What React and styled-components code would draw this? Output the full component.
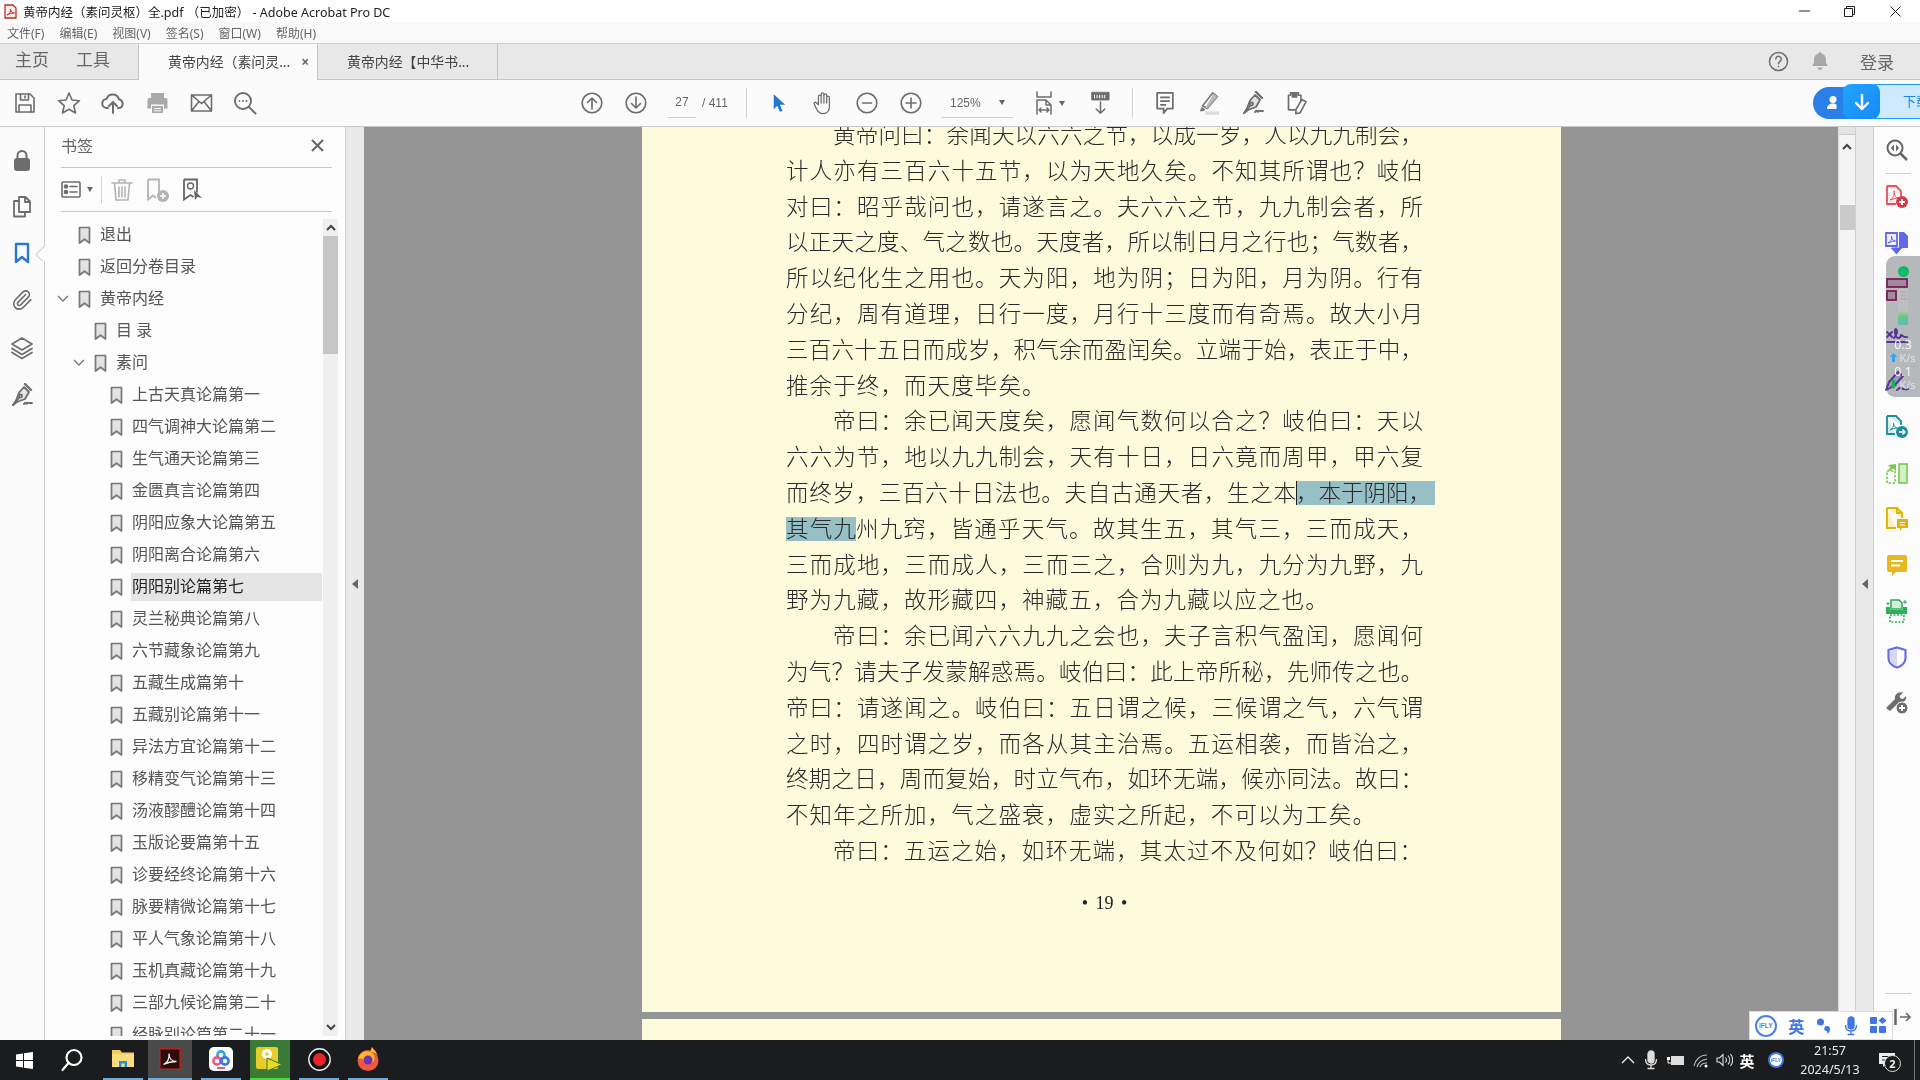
import React from 'react';
import styled, { createGlobalStyle } from 'styled-components';

const Global = createGlobalStyle`
  html, body { margin: 0; padding: 0; background: #fff; overflow: hidden; }
  #root { width: 1920px; height: 1080px; }
  * { box-sizing: border-box; }
`;
const UI = `"Noto Sans", "Noto Sans CJK SC", sans-serif`;

const Win = styled.div`position: relative; width: 1920px; height: 1080px; display: flex; flex-direction: column; overflow: hidden; font-family: ${UI}; color: #555;`;

const TitleBar = styled.div`height: 22px; flex: none; display: flex; align-items: center; background: #fff; padding-left: 4px; color: #222; font-size: 12.5px;`;
const TitleText = styled.span`margin-left: 6px; white-space: pre;`;
const WinButtons = styled.div`margin-left: auto; display: flex; padding-right: 2px;`;
const WinBtn = styled.div`width: 45.5px; height: 20px; display: flex; align-items: center; justify-content: center;`;

const MenuBar = styled.div`height: 21px; flex: none; display: flex; gap: 15px; align-items: center; background: #f9f9f9; padding-left: 7px; font-size: 12px; color: #666;`;

const TabBar = styled.div`height: 37px; flex: none; display: flex; background: #e8e8e8; border-top: 1px solid #cfcfcf; border-bottom: 1px solid #c6c6c6;`;
const HomeTab = styled.div`width: ${p => p.$w}px; padding-left: ${p => p.$pl}px; font-size: 17px; line-height: 32px; color: #666;`;
const DocTab = styled.div`width: ${p => p.$w}px; height: ${p => p.$active ? 36 : 35}px; display: flex; align-items: center; padding: 0 0 2px 29px; font-size: 13.9px; color: #444; white-space: nowrap;
  background: ${p => p.$active ? '#fbfbfb' : '#e8e8e8'}; border-left: ${p => p.$active ? '1px solid #c6c6c6' : '0'}; border-right: 1px solid #c6c6c6;`;
const TabClose = styled.span`margin-left: 11px; font-size: 14px; font-weight: 700; color: #666;`;
const TabRight = styled.div`margin-left: auto; display: flex; align-items: center; padding-right: 26px; padding-bottom: 1px;`;
const TabIconGap = styled.span`width: 22.5px;`;
const Login = styled.span`font-size: 17px; color: #666; margin-left: 31px;`;

const Toolbar = styled.div`height: 47px; flex: none; display: flex; align-items: center; background: #fbfbfb; border-bottom: 1px solid #c8c8c8; padding-left: 3px;`;
const ToolBtn = styled.div`width: ${p => p.$w || 44}px; margin-left: ${p => p.$ml || 0}px; height: 36px; flex: none; display: flex; align-items: center; justify-content: center;`;
const ToolSep = styled.div`width: 1px; height: 30px; background: #d2d2d2; margin: 0 ${p => p.$r || 10}px 0 ${p => p.$l || 10}px; flex: none;`;
const PageInput = styled.div`width: 28px; margin-left: 10px; height: 30px; line-height: 28px; text-align: center; font-size: 12px; color: #666; border-bottom: 1px solid #cfcfcf; font-family: "Liberation Sans", sans-serif; flex: none;`;
const PageTotal = styled.div`width: 38px; margin-left: 2px; font-size: 12px; color: #666; font-family: "Liberation Sans", sans-serif; white-space: pre; padding-left: 4px; flex: none;`;
const ZoomBox = styled.div`width: 71px; margin-left: 9px; height: 30px; border-bottom: 1px solid #cfcfcf; display: flex; align-items: center; justify-content: space-between; padding: 0 8px 0 8px; font-size: 12px; color: #666; flex: none; font-family: "Liberation Sans", sans-serif;`;
const Caret = styled.i`display: block; flex: none; width: 0; height: 0; border-left: 3.5px solid transparent; border-right: 3.5px solid transparent; border-top: 5px solid #666;`;

const Main = styled.div`flex: 1; min-height: 0; display: flex;`;
const LeftRail = styled.div`width: 45px; flex: none; background: #fbfbfb; border-right: 1px solid #cfcfcf; display: flex; flex-direction: column; padding-top: 10px; position: relative;`;
const RailBtn = styled.div`height: ${p => p.$h || 46.5}px; display: flex; align-items: center; justify-content: center;`;
const Notch = styled.i`position: absolute; right: -1px; top: 118px; width: 11px; height: 16px; overflow: hidden;
  &::after { content: ''; position: absolute; left: 4px; top: 2.5px; width: 11px; height: 11px; background: #fff; border: 1px solid #cfcfcf; transform: rotate(45deg); }`;

const Panel = styled.div`width: 300px; flex: none; background: #fcfcfc; display: flex; flex-direction: column; padding-bottom: 4px;`;
const PanelHead = styled.div`height: 41px; flex: none; margin: 0 13px 0 16px; display: flex; align-items: center; justify-content: space-between; border-bottom: 1px solid #c9c9c9; font-size: 16px; color: #666; padding: 0 8px 4px 0;`;
const PanelTools = styled.div`height: 44px; flex: none; margin: 0 13px 0 16px; display: flex; align-items: center; border-bottom: 1px solid #c9c9c9;`;
const PanelSep = styled.div`width: 1px; height: 28px; background: #d5d5d5; margin: 0 9px 0 8px;`;
const Gap = styled.span`width: ${p => p.$w}px; flex: none;`;
const ListArea = styled.div`flex: 1; min-height: 0; display: flex; margin-right: 7px;`;
const Tree = styled.div`flex: 1; min-width: 0; overflow: hidden; padding-top: 7px;`;
const Row = styled.div`height: 32px; display: flex; align-items: center; padding-left: ${p => 11 + 16 * p.$d}px;`;
const Chevron = styled.div`width: 22px; flex: none; display: flex; align-items: center;`;
const Label = styled.div`flex: 1; height: 28px; margin: 0 1px 0 8px; padding-left: 1px; line-height: 27px; font-size: 16px; white-space: pre; color: ${p => p.$sel ? '#222' : '#555'}; background: ${p => p.$sel ? '#e5e5e5' : 'transparent'};`;
const PanelScroll = styled.div`width: 15px; flex: none; margin-top: 7px; background: #efefef; display: flex; flex-direction: column; align-items: center;`;
const ScrollArrow = styled.div`height: 17px; flex: none; display: flex; align-items: center; justify-content: center;`;
const PanelThumb = styled.div`width: 15px; height: 118px; background: #c6c6c6; flex: none;`;
const Fill = styled.span`flex: 1;`;

const Splitter = styled.div`width: ${p => p.$w}px; flex: none; background: #e9e9e9; border-left: 1px solid #cfcfcf; display: flex; align-items: center; justify-content: center; ${p => p.$rb ? 'border-right: 1px solid #cfcfcf;' : ''}`;
const LeftTri = styled.i`display: block; width: 0; height: 0; border-top: 5px solid transparent; border-bottom: 5px solid transparent; border-right: 6px solid #666;`;

const Viewer = styled.div`width: 1474px; flex: none; background: #959595; overflow: hidden; padding-left: 278px; display: flex; flex-direction: column;`;
const PageSheet = styled.div`width: 919px; height: 885px; flex: none; background: #fdfbdc; overflow: hidden; padding: 0 0 0 144px;`;
const PageBody = styled.div`margin-top: -10px; width: 637px; font-size: 22.5px; line-height: 35.8px; color: #2a2a2a; font-weight: 300;`;
const DocLine = styled.div`height: 35.8px; padding-left: ${p => p.$indent ? 47 : 0}px; text-align: justify; text-align-last: ${p => p.$end ? 'left' : 'justify'}; letter-spacing: ${p => p.$end ? '1.1px' : '0'};`;
const DocPart = styled.span`display: inline-block; width: ${p => p.$w}px; vertical-align: baseline; white-space: nowrap;`;
const Sel = styled.span`display: inline-block; width: ${p => p.$w}px; height: 24px; line-height: 24px; vertical-align: baseline; white-space: nowrap; background: #96bfc6;
  ${p => p.$tail ? `padding-right: ${p.$tail}px; margin-right: -${p.$tail}px; box-shadow: inset 1px 0 0 #222;` : ''}`;
const PageNum = styled.div`margin-top: 17px; text-align: center; text-align-last: center; font-family: "Liberation Serif", serif; font-size: 18px; word-spacing: 3px; white-space: pre; color: #222; font-weight: 400;`;
const PageGap = styled.div`height: 7px; flex: none;`;
const NextSheet = styled.div`width: 919px; flex: 1; background: #fdfbdc;`;

const VScroll = styled.div`width: 17px; flex: none; background: #f4f4f4; border-left: 1px solid #ddd; display: flex; flex-direction: column; align-items: center;`;
const VCap = styled.div`width: 100%; height: 8px; background: #e4e4e4; border-bottom: 1px solid #c8c8c8; flex: none;`;
const VArrow = styled.div`height: 20px; margin-top: 1px; flex: none; display: flex; align-items: center;`;
const VThumb = styled.div`width: 15px; height: 25px; background: #cacaca; margin-top: 49px; flex: none;`;

const RightRail = styled.div`flex: 1; background: #fcfcfc; display: flex; flex-direction: column; align-items: center;`;
const RBtn = styled.div`height: 46px; width: 100%; flex: none; display: flex; align-items: center; justify-content: center;`;
const RDiv = styled.div`width: 26px; height: 1px; background: #cfcfcf; flex: none; margin-left: 2px;`;
const RBottomDiv = styled(RDiv)`margin-top: auto; margin-bottom: 46px;`;

const TaskBar = styled.div`height: 40px; flex: none; display: flex; background: #1b1c1d; color: #eee;`;
const TaskPlain = styled.div`width: 48px; flex: none; display: flex; align-items: center; justify-content: center;`;
const TaskItem = styled.div`width: ${p => p.$w || 40}px; margin-left: ${p => p.$ml}px; flex: none; display: flex; align-items: center; justify-content: center;
  background: ${p => p.$bg || 'transparent'}; border-bottom: 2px solid ${p => p.$line || '#6aaede'};`;
const Tray = styled.div`margin-left: auto; display: flex; padding-right: 12px;`;
const TraySlot = styled.div`width: ${p => p.$w}px; flex: none; display: flex; align-items: center; justify-content: center; position: relative;`;
const ImeChar = styled.span`font-size: 15px; font-weight: 700; color: #fff;`;
const Clock = styled.div`display: flex; flex-direction: column; align-items: center; font-size: 12.5px; line-height: 19px; color: #e8e8e8; white-space: nowrap; font-family: "Noto Sans", sans-serif;`;
const NotifBadge = styled.span`position: absolute; left: 18px; top: 15px; width: 17px; height: 17px; border-radius: 50%; background: #1b1c1d; border: 1px solid #ddd; color: #eee; font-size: 11px; font-weight: 700; line-height: 15px; text-align: center;`;
const ShowDesktop = styled.i`position: absolute; right: -7px; top: 0; bottom: 0; width: 1px; background: #777;`;

const Download = styled.div`position: absolute; right: 0; top: 84px; width: 107px; height: 35px; display: flex; overflow: hidden;`;
const DlPill = styled.div`width: 40px; margin-top: 3px; height: 32px; margin-right: -10px; background: #2a80e6; border-radius: 16px 0 0 16px; display: flex; align-items: center; padding-left: 14px; flex: none;`;
const DlArrow = styled.div`position: relative; width: 37px; height: 35px; background: linear-gradient(135deg, #22a5ff, #1689f2); border-radius: 8px; display: flex; align-items: center; justify-content: center; flex: none;`;
const DlText = styled.div`flex: 1; height: 35px; margin-left: -6px; padding-left: 28px; background: #cfe9ff; border: 1px solid #1e9bff; border-right: 0; font-size: 13px; line-height: 32px; color: #1a88e8; white-space: nowrap; overflow: hidden;`;

const Monitor = styled.div`position: absolute; right: 0; top: 256px; width: 34px; height: 141px; display: flex; flex-direction: column; align-items: center; color: #f6f6f6; font-size: 12.5px; line-height: 13px; padding-top: 10px;
  &::before { content: ''; position: absolute; inset: 0; background: #b7bbbd; border-radius: 9px 0 0 9px; mix-blend-mode: multiply; }
  & > * { position: relative; }`;
const MonDot = styled.i`width: 11px; height: 11px; border-radius: 50%; background: #10b868; flex: none;`;
const MonBar = styled.i`width: 10px; height: 36px; margin-top: 12px; flex: none; background: linear-gradient(#c0c0c0 0 60%, #55cc77 78%, #5ab9c5 100%); opacity: .9;`;
const MonVal = styled.div`margin-top: ${p => p.$mt}px; text-align: center; flex: none;`;
const MonRate = styled.div`display: flex; align-items: center; gap: 2px; flex: none; color: #e2e2e2; font-size: 11px; white-space: nowrap;`;

const Ifly = styled.div`position: absolute; left: 1749px; top: 1011px; width: 144px; height: 29px; background: #fff; border: 1px solid #dcdcdc; display: flex; align-items: center; padding-left: 2px;`;
const IflyBtn = styled.div`width: 27.5px; margin-right: ${p => p.$mr || 0}px; height: 100%; display: flex; align-items: center; justify-content: center; flex: none;`;
const IflyLogo = styled.span`width: 22px; height: 22px; border-radius: 50%; border: 2.5px solid #4a7fe8; color: #4a7fe8; font-size: 6.5px; font-weight: 700; line-height: 17px; text-align: center; font-family: "Liberation Sans", sans-serif; flex: none;`;
const IflyCh = styled.span`color: #3f76e4; font-size: 16px; font-weight: 700;`;
const TrayLogo = styled.span`width: 16px; height: 16px; border-radius: 50%; background: #fff; border: 2px solid #3f76e4; color: #3f76e4; font-size: 5px; font-weight: 700; line-height: 12px; text-align: center; font-family: "Liberation Sans", sans-serif;`;
const ExitArrow = styled.div`position: absolute; left: 1893px; top: 1008px; width: 20px; height: 17px; display: flex; align-items: center; justify-content: center;`;

/* ---------- icons ---------- */
const G = '#6d6d6d';
const S = ({ w = 22, h = 22, vb = '0 0 22 22', c = G, sw = 1.6, children }) => (
  <svg width={w} height={h} viewBox={vb} fill="none" stroke={c} strokeWidth={sw} strokeLinecap="round" strokeLinejoin="round">{children}</svg>
);
const BM = () => (
  <svg width="13" height="19" viewBox="0 0 13 19"><path d="M1.5 1.5h10v15.5l-5-3.8-5 3.8z" fill="#e2e2e2" stroke="#777" strokeWidth="1.7" strokeLinejoin="round" /></svg>
);
const Chev = () => <svg width="14" height="10" viewBox="0 0 14 10"><path d="M2 2l5 5 5-5" fill="none" stroke="#777" strokeWidth="1.4" /></svg>;
const ArrowUpS = ({ flip }) => <svg width="10" height="7" viewBox="0 0 10 7"><path d={flip ? 'M1 1l4 4 4-4' : 'M1 6l4-4 4 4'} fill="none" stroke="#444" strokeWidth="2" /></svg>;

const SaveI = () => <S><path d="M2 2h14l4 4v14H2z" /><path d="M6.5 2v6h8V2M11 4v2M5 20v-7h12v7" /></S>;
const StarI = () => <S w={24} h={24} vb="0 0 24 24"><path d="M12 2l3 7 7.5.7-5.7 5 1.7 7.3L12 18.2 5.5 22l1.7-7.3-5.700-5L9 9z" /></S>;
const CloudI = () => <S w={24} h={24} vb="0 0 24 24" sw={2}><path d="M7 17H6a4.500 4.500 0 0 1-.5-9A6.500 6.500 0 0 1 18 8.500a4.300 4.300 0 0 1 0 8.500h-1" /><path d="M12 22V11M8 15l4-4 4 4" /></S>;
const PrintI = () => <svg width="23" height="22" viewBox="0 0 23 22" fill="#a9a9a9"><path d="M5 1h13v5H5zM1.500 7.500A1.500 1.500 0 0 1 3 6h17a1.500 1.500 0 0 1 1.500 1.500v9H18v-4H5v4H1.500z" /><path d="M6 14h11v7H6z" /><path d="M8 16.500h7M8 18.800h7" stroke="#fff" /></svg>;
const MailI = () => <S w={23} h={20} vb="0 0 23 20"><path d="M1.500 2h20v16h-20zM1.500 2l10 8.500 10-8.500M1.500 18l7.500-9.500M21.500 18L14 8.500" /></S>;
const FindI = () => <S w={24} h={24} vb="0 0 24 24" sw={1.9}><circle cx="10" cy="10" r="8" /><path d="M16 16l6.500 6.500" /><path d="M6.500 10h.01M10 10h.01M13.500 10h.01" /></S>;
const CircleArrow = ({ down }) => <S><circle cx="11" cy="11" r="9.800" /><path d={down ? 'M11 5v11M6.500 11.500L11 16l4.500-4.500' : 'M11 17V6M6.500 10.500L11 6l4.500 4.500'} /></S>;
const Pointer = () => <svg width="14" height="20" viewBox="0 0 16 22"><path d="M2 1v17l4-4 3 7 3-1-3-7h6z" fill="#2277cc" /></svg>;
const HandI = () => <S w={22} h={24} vb="0 0 24 26" sw={1.4}><path d="M7 15V6a1.500 1.500 0 0 1 3 0V3.500a1.500 1.500 0 0 1 3 0V4.500a1.500 1.500 0 0 1 3 0V7a1.500 1.500 0 0 1 3 0v10c0 4-2.500 7.500-7 7.500-3.500 0-5-1.500-6.500-4L2.500 14.500c-1-1.500 1-3 2.300-1.800zM10 6v7M13 4v9M16 5v8" /></S>;
const CircleOp = ({ plus }) => <S><circle cx="11" cy="11" r="9.800" /><path d={plus ? 'M6 11h10M11 6v10' : 'M6.500 11h9'} /></S>;
const FitI = () => <S w={18} h={24} vb="0 0 18 24" sw={1.5}><path d="M2 1v5h14V1" /><path d="M2 23V9h9l5 5v9M11 9v5h5M4 19h10M4 19l2-2M4 19l2 2M14 19l-2-2M14 19l-2 2" /></S>;
const ReadI = () => <svg width="21" height="24" viewBox="0 0 24 28" fill="none" stroke={G} strokeLinecap="round" strokeLinejoin="round"><path d="M2 1.500h20v9H2z" fill={G} /><path d="M5 5v3M8 5v3M11 5v3M14 5v3M17 5v3" stroke="#fff" strokeWidth="1.200" /><path d="M12 13v13M7 21l5 5 5-5" strokeWidth="1.800" /></svg>;
const NoteI = () => <S w={20} h={24} vb="0 0 21 26" sw={1.9}><path d="M2 2h17v17h-6l-4 5v-5H2z" /><path d="M6 7h9M6 11h9M6 15h5" /></S>;
const MarkerI = () => <svg width="22" height="24" viewBox="0 0 24 26" fill="none"><path d="M16 2l5 4L10 19l-5-3z" stroke="#777" strokeWidth="1.800" strokeLinejoin="round" /><path d="M17 3l4 3-11 13-2-1z" fill="#bbb" /><path d="M4 17l-2 5h4l2-2" fill="#777" /><path d="M8 22h15v4H8z" fill="#dedede" /></svg>;
const PenI = ({ s = 24, c = '#6d6d6d' }) => <svg width={s} height={s} viewBox="0 0 24 24" fill="none" stroke={c} strokeWidth="1.800" strokeLinejoin="round" strokeLinecap="round"><path d="M14 4l5 5-4 7-8 3-4 3 3-4.500 3-8z" fill="#e4e4e4" /><path d="M15 1l6 6" strokeWidth="2.400" /><path d="M3 22l6-7" /><circle cx="10.500" cy="13" r="1.500" fill="#fff" /><path d="M14 21c1-1 1.500-2 2-1s1 1 1.500 0 1 0 1.500 0 1 0 3 0" /></svg>;
const TagI = () => <S w={21} h={24} vb="0 0 24 28" sw={1.9}><path d="M13 5V2H4v3H1.500v17H9M13 5h3v6" /><path d="M6 3h5v4H6z" fill={G} /><path d="M17 10l5 2.500-7 13-5 1 .3-5z" /></S>;

const HelpI = () => <S w={21} h={21} vb="0 0 21 21" sw={1.5}><circle cx="10.500" cy="10.500" r="9" /><path d="M7.800 8a2.700 2.700 0 1 1 4.300 2.200c-1 .8-1.600 1.200-1.600 2.500M10.500 15.500v.1" /></S>;
const BellI = () => <svg width="18" height="20" viewBox="0 0 18 20" fill="#a8a8a8"><path d="M9 1a1.500 1.500 0 0 1 1.500 1.500C14 3.500 15 6 15 9v3l2 3H1l2-3V9c0-3 1-5.500 4.500-6.500A1.500 1.500 0 0 1 9 1zM6.500 16.500h5a2.500 2.500 0 0 1-5 0z" /></svg>;

const LockI = () => <svg width="18" height="23" viewBox="0 0 18 23"><path d="M4.500 10V6.500a4.500 4.500 0 0 1 9 0V10" fill="none" stroke={G} strokeWidth="2" /><rect x="1" y="9" width="16" height="13" rx="3" fill={G} /></svg>;
const PagesI = () => <S w={20} h={23} vb="0 0 20 23" sw={1.8}><path d="M7 17V2h6.500L18 6.500V17zM13 2v5h5" /><path d="M7 6H2v15.500h11V17" /></S>;
const BookmarkBlue = () => <svg width="16" height="23" viewBox="0 0 16 23"><path d="M2 2h12v18l-6-5-6 5z" fill="none" stroke="#2a78cf" strokeWidth="2.400" strokeLinejoin="round" /></svg>;
const ClipI = () => <S w={22} h={22} vb="0 0 24 24" sw={1.8}><path d="m16 6-8.414 8.586a2 2 0 0 0 2.829 2.829l8.414-8.586a4 4 0 1 0-5.657-5.657l-8.379 8.551a6 6 0 1 0 8.485 8.485l8.379-8.551" /></S>;
const LayerI = () => <S w={24} h={24} vb="0 0 24 24" sw={1.7}><path d="M12 2l10 6-10 6L2 8zM2 12.500l10 6 10-6M2 16.500l10 6 10-6" /></S>;

const ListViewI = () => <S w={20} h={17} vb="0 0 20 17"><rect x="1" y="1" width="18" height="15" rx="1" /><path d="M9 5.500h7M9 11h7" /><circle cx="5" cy="5.500" r="1.500" fill={G} /><circle cx="5" cy="11" r="1.500" fill={G} /></S>;
const TrashI = () => <S w={22} h={24} vb="0 0 22 24" c="#b4b4b4"><path d="M1 5h20M8 5V2h6v3M3.500 5l1.500 17h12l1.500-17M8 9v10M11 9v10M14 9v10" /></S>;
const AddBM = () => <svg width="24" height="24" viewBox="0 0 24 24"><path d="M2 1.500h11v14M2 1.500v20l5-4 3 2.500" fill="none" stroke="#b4b4b4" strokeWidth="1.800" /><circle cx="17" cy="18" r="6" fill="#b4b4b4" /><path d="M14 18h6M17 15v6" stroke="#fff" strokeWidth="1.500" /></svg>;
const FindBM = () => <svg width="22" height="24" viewBox="0 0 22 24"><path d="M2 1.500h13v13M2 1.500v20l6.500-4.500 3 2" fill="none" stroke="#666" strokeWidth="1.800" /><circle cx="8.500" cy="8" r="3" fill="none" stroke="#666" strokeWidth="1.400" /><path d="M12 12l1 10 2.500-3 4.500 1z" fill="#666" /></svg>;

/* right rail */
const RSearch = () => <svg width="22" height="22" viewBox="0 0 22 22" fill="none"><circle cx="9" cy="9" r="7.500" stroke="#666" strokeWidth="2" /><path d="M14.500 14.500L21 21" stroke="#666" strokeWidth="2.500" /><path d="M8 5.500L5 9l3 3.500zM10 5.500L13 9l-3 3.500z" fill="#666" /></svg>;
const DocPlus = () => <svg width="24" height="24" viewBox="0 0 24 24" fill="none"><path d="M2 1h9l5 5v5M2 1v18h9" stroke="#e2525f" strokeWidth="1.800" fill="#fdeaea" /><path d="M5 15c3-1 5-5 4-9 0 5 2 7 5 7-3 0-6 1-9 2z" stroke="#e2525f" /><circle cx="17" cy="17" r="6" fill="#dc3545" /><path d="M14 17h6M17 14v6" stroke="#fff" strokeWidth="2" /></svg>;
const DocConvert = () => <svg width="24" height="25" viewBox="0 0 24 25" fill="none"><path d="M14 1h5l4 4v12h-9z" fill="#6366e8" /><path d="M1 2h11v13H1z" stroke="#6366e8" strokeWidth="1.800" fill="#eef" /><path d="M3 12c3-1 4-4 3.500-7 0 3 2 5 4 5-3 0-5 1-7.500 2z" stroke="#6366e8" /><path d="M11 14v6M6.500 17l5 6 5-6z" fill="#6366e8" stroke="#6366e8" /></svg>;
const LayoutPink = () => <svg width="22" height="23" viewBox="0 0 22 23" fill="none" stroke="#a52a78" strokeWidth="1.800"><rect x="1" y="1" width="20" height="8" fill="#e8b9d6" /><rect x="1" y="13" width="9" height="9" fill="#e8b9d6" /><path d="M14 14h7M14 17.500h7M14 21h7" /></svg>;
const SignI = () => <svg width="22" height="20" viewBox="0 0 22 20" fill="none" stroke="#7a44c8" strokeWidth="1.900" strokeLinecap="round"><path d="M1 7l5 5M6 7l-5 5M8 13c3-3 4-8 2-9s-1 9 2 9 3-2 3-3 3 3 6 2" /><path d="M1 17h20" /></svg>;
const SignPen = () => <svg width="24" height="22" viewBox="0 0 24 22" fill="none" stroke="#7a44c8" strokeWidth="1.900" strokeLinecap="round" strokeLinejoin="round"><path d="M1 20l3-8 9-10 5 4-9 10z" fill="#dccdf0" /><path d="M12 20c2-1 2-3 4-2s3 2 7 1" /></svg>;
const DocTeal = () => <svg width="24" height="24" viewBox="0 0 24 24" fill="none"><path d="M2 1h9l5 5v4M2 1v18h8" stroke="#1d8c9c" strokeWidth="1.800" fill="#d3ecef" /><path d="M5 15c3-1 4-4 3.500-7 0 3 2 5 4 5-3 0-5 1-7.500 2z" stroke="#1d8c9c" /><circle cx="17" cy="17" r="6" fill="#1d8c9c" /><path d="M14 17h6M17.500 14.500L20 17l-2.500 2.500" stroke="#fff" strokeWidth="1.600" /></svg>;
const CropGreen = () => <svg width="22" height="21" viewBox="0 0 22 21" fill="none"><rect x="13" y="1" width="8" height="19" fill="#d4eec8" stroke="#7ac74f" strokeWidth="1.600" /><path d="M1 8h8v12H1z" stroke="#7ac74f" strokeWidth="1.600" strokeDasharray="2.500 1.500" /><path d="M10 1L2 2l2.500 2.500L2 7l2 1 3-2.500L10 8z" fill="#7ac74f" /></svg>;
const DocNote = () => <svg width="23" height="24" viewBox="0 0 23 24" fill="none"><path d="M1 1h10l5 5v5M1 1v20h9" stroke="#e0b400" strokeWidth="1.900" fill="#fbf0c2" /><path d="M11 1v5h5" stroke="#e0b400" strokeWidth="1.900" /><path d="M11 12h11v9h-6l-2 3v-3h-3z" fill="#e0b400" /><path d="M14 15.500h5M14 18h5" stroke="#fff" /></svg>;
const ChatY = () => <svg width="20" height="21" viewBox="0 0 20 21"><path d="M2 0h16a2 2 0 0 1 2 2v13a2 2 0 0 1-2 2H9l-4 4v-4H2a2 2 0 0 1-2-2V2a2 2 0 0 1 2-2z" fill="#e6b91e" /><path d="M4 6h12M4 10.500h9" stroke="#fff" strokeWidth="1.800" /></svg>;
const ScanG = () => <svg width="24" height="24" viewBox="0 0 24 24" fill="none"><path d="M6 1h8l3 3v6H6z" fill="#d2efd9" stroke="#2fae5f" strokeWidth="1.600" /><path d="M1 8h4v3h13V8h4v7H1z" fill="#2fae5f" /><path d="M5 16h14v7H5z" stroke="#2fae5f" strokeWidth="1.600" strokeDasharray="2 1.500" /><path d="M20 1v4M18 3h4M3 3v3M1.500 4.500h3" stroke="#2fae5f" /></svg>;
const ShieldI = () => <svg width="20" height="23" viewBox="0 0 20 23"><path d="M10 1.500L18.500 4v8c0 5-4 8-8.500 9.500C5.500 20 1.500 17 1.500 12V4z" fill="#fff" stroke="#6a6be6" strokeWidth="2.200" /><path d="M10 3L3 5v7c0 4 3 6.500 7 8z" fill="#d7d8f7" /></svg>;
const ToolPlus = () => <svg width="24" height="24" viewBox="0 0 24 24"><path d="M2 20L11 11c-1-4 3-8 8-6.500L15.500 8l1 2.500L19 11l3-3c1 4-3 7.500-7 6.500L6 23z" fill={G} transform="translate(-1 -3)" /><circle cx="17" cy="17" r="6" fill={G} stroke="#fcfcfc" /><path d="M14 17h6M17 14v6" stroke="#fff" strokeWidth="1.800" /></svg>;

/* taskbar */
const WinLogo = () => <svg width="17" height="17" viewBox="0 0 17 17" fill="#fff"><path d="M0 2.500l7-1v6.500H0zM8 1.300L17 0v8H8zM0 9h7v6.500l-7-1zM8 9h9v8l-9-1.300z" /></svg>;
const SearchW = () => <svg width="24" height="24" viewBox="0 0 24 24" fill="none" stroke="#fff" strokeWidth="2.200" strokeLinecap="round"><circle cx="14" cy="9.500" r="7.500" /><path d="M8.500 15L2.500 22" /></svg>;
const Folder = () => <svg width="24" height="20" viewBox="0 0 24 20"><path d="M1 1h8l2 2.500H23V18H1z" fill="#f5c95c" /><path d="M1 5h22v13H1z" fill="#fbdb7f" /><path d="M8 12h8v6h-2.500v-3.500h-3V18H8z" fill="#2c8fd8" /></svg>;
const AcrobatI = () => <svg width="22" height="22" viewBox="0 0 22 22"><rect x=".8" y=".8" width="20.400" height="20.400" fill="#2c0b0b" stroke="#a92a20" strokeWidth="1.600" /><path d="M4.500 16.500c4-2 6-6 5.500-11 0 5 3 8 7.500 8-5 0-9 1-13 3z" fill="none" stroke="#eee" strokeWidth="1.300" /></svg>;
const Baidu = () => <svg width="24" height="24" viewBox="0 0 24 24"><rect width="24" height="24" rx="5" fill="#fff" /><g fill="none" strokeWidth="2.600"><circle cx="12" cy="8" r="3.600" stroke="#2fa4ee" /><circle cx="8" cy="14" r="3.600" stroke="#e35d8b" /><circle cx="16" cy="14" r="3.600" stroke="#2f79e8" /></g><path d="M8 21h8" stroke="#e35d8b" strokeWidth="2" /></svg>;
const Player = () => <svg width="30" height="26" viewBox="0 0 30 26"><rect x="1" y="1" width="22" height="22" rx="2" fill="#e6cd2c" /><circle cx="12" cy="8" r="5" fill="#fff" /><path d="M10.500 5.500l4 2.500-4 2.500z" fill="#e6cd2c" /><path d="M12 12l15 6.500L12 25z" fill="#e6d92c" stroke="#3b7a36" /></svg>;
const RecordI = () => <svg width="23" height="23" viewBox="0 0 23 23"><circle cx="11.500" cy="11.500" r="10.700" fill="#111" stroke="#eee" strokeWidth="1.400" /><circle cx="11.500" cy="11.500" r="6.500" fill="#e8242b" /></svg>;
const FoxI = () => <svg width="24" height="24" viewBox="0 0 24 24"><circle cx="12" cy="13.500" r="10.500" fill="#f1583f" /><path d="M2 12C4 5 10 3 14 5c1-2 1-3 2-5 2 3 6 5 6 12 0-5-3-7-7-7 4 2 5 7 2 10-4 4-10 1-10-3-1 0-2-1-5 0z" fill="#ffb52c" /><circle cx="12" cy="13" r="4.500" fill="#6c2fb5" /></svg>;

const ChevUp = () => <svg width="16" height="10" viewBox="0 0 16 10" fill="none" stroke="#eee" strokeWidth="1.400"><path d="M2 8l6-6 6 6" /></svg>;
const MicW = ({ c = '#ddd' }) => <svg width="14" height="20" viewBox="0 0 14 20" fill="none" stroke={c} strokeWidth="1.300"><rect x="4" y="1" width="6" height="12" rx="3" fill={c} /><path d="M1.500 9c0 4 2 6 5.500 6s5.500-2 5.500-6M7 15v3M3.500 18.500h7" /></svg>;
const Battery = () => <svg width="18" height="12" viewBox="0 0 18 12"><rect x="4" y="2" width="13" height="9" fill="#ddd" /><path d="M0 3h3v3H0z" fill="#fff" /><path d="M1 6v3h3" stroke="#fff" fill="none" /></svg>;
const Wifi = () => <svg width="16" height="15" viewBox="0 0 16 15" fill="none" stroke="#bbb" strokeWidth="1.100"><path d="M1 13C2 7 7 2 14 2M4 14c1-4 4-7 10-8M7 14c.5-2 3-4 7-4" /><circle cx="13" cy="13" r="1.500" fill="#fff" stroke="none" /></svg>;
const Speaker = () => <svg width="17" height="14" viewBox="0 0 17 14" fill="none" stroke="#ddd" strokeWidth="1.100"><path d="M1 5h2.500L7 1.500v11L3.500 9H1zM9.500 4.500a4 4 0 0 1 0 5M12 2.500a7 7 0 0 1 0 9M14.500 1a9.500 9.500 0 0 1 0 12" /></svg>;
const NotifI = () => <svg width="16" height="14" viewBox="0 0 16 14"><path d="M0 0h16v11H7l-3 3v-3H0z" fill="#eee" /><path d="M3 3.500h10M3 7h8" stroke="#1b1c1d" /></svg>;

const IfDots = () => <svg width="16" height="18" viewBox="0 0 16 18" fill="#3f76e4"><circle cx="4.500" cy="5" r="3.500" /><path d="M11 9a3 3 0 0 1 3 3c0 2-1 4-3 5 .5-2 .5-3-.5-3a2.500 2.500 0 0 1 .5-5z" /></svg>;
const IfGrid = () => <svg width="17" height="17" viewBox="0 0 17 17" fill="#3f76e4"><rect width="7" height="7" rx="1" /><rect y="9" width="7" height="7" rx="1" /><rect x="9" y="9" width="7" height="7" rx="1" /><path d="M12.500 0l4 3.500-4 3.500-4-3.500z" /></svg>;

const TREE = [
  [0, '退出'], [0, '返回分卷目录'], [0, '黄帝内经', 1], [1, '目 录'], [1, '素问', 1],
  [2, '上古天真论篇第一'], [2, '四气调神大论篇第二'], [2, '生气通天论篇第三'], [2, '金匮真言论篇第四'],
  [2, '阴阳应象大论篇第五'], [2, '阴阳离合论篇第六'], [2, '阴阳别论篇第七', 0, 1], [2, '灵兰秘典论篇第八'],
  [2, '六节藏象论篇第九'], [2, '五藏生成篇第十'], [2, '五藏别论篇第十一'], [2, '异法方宜论篇第十二'],
  [2, '移精变气论篇第十三'], [2, '汤液醪醴论篇第十四'], [2, '玉版论要篇第十五'], [2, '诊要经终论篇第十六'],
  [2, '脉要精微论篇第十七'], [2, '平人气象论篇第十八'], [2, '玉机真藏论篇第十九'], [2, '三部九候论篇第二十'],
  [2, '经脉别论篇第二十一'],
];

const LINES = [
  ['黄帝问曰：余闻天以六六之节，以成一岁，人以九九制会，', 1],
  ['计人亦有三百六十五节，以为天地久矣。不知其所谓也？岐伯'],
  ['对曰：昭乎哉问也，请遂言之。夫六六之节，九九制会者，所'],
  ['以正天之度、气之数也。天度者，所以制日月之行也；气数者，'],
  ['所以纪化生之用也。天为阳，地为阴；日为阳，月为阴。行有'],
  ['分纪，周有道理，日行一度，月行十三度而有奇焉。故大小月'],
  ['三百六十五日而成岁，积气余而盈闰矣。立端于始，表正于中，'],
  ['推余于终，而天度毕矣。', 0, 1],
  ['帝曰：余已闻天度矣，愿闻气数何以合之？岐伯曰：天以', 1],
  ['六六为节，地以九九制会，天有十日，日六竟而周甲，甲六复'],
  ['SEL1'],
  ['SEL2'],
  ['三而成地，三而成人，三而三之，合则为九，九分为九野，九'],
  ['野为九藏，故形藏四，神藏五，合为九藏以应之也。', 0, 1],
  ['帝曰：余已闻六六九九之会也，夫子言积气盈闰，愿闻何', 1],
  ['为气？请夫子发蒙解惑焉。岐伯曰：此上帝所秘，先师传之也。'],
  ['帝曰：请遂闻之。岐伯曰：五日谓之候，三候谓之气，六气谓'],
  ['之时，四时谓之岁，而各从其主治焉。五运相袭，而皆治之，'],
  ['终期之日，周而复始，时立气布，如环无端，候亦同法。故曰：'],
  ['不知年之所加，气之盛衰，虚实之所起，不可以为工矣。', 0, 1],
  ['帝曰：五运之始，如环无端，其太过不及何如？岐伯曰：', 1, 1],
];

const lineContent = t => {
  if (t === 'SEL1') return <><DocPart $w={510}>而终岁，三百六十日法也。夫自古通天者，生之本</DocPart><Sel $w={139} $tail={12}>，本于阴阳，</Sel></>;
  if (t === 'SEL2') return <><Sel $w={70}>其气九</Sel><DocPart $w={567}>州九窍，皆通乎天气。故其生五，其气三，三而成天，</DocPart></>;
  return t;
};

export default function App() {
  return (
    <Win lang="zh-CN">
      <Global />
      <TitleBar>
        <svg width="13" height="15" viewBox="0 0 13 15"><path d="M1 1h8l3 3v10H1z" fill="#fdeeee" stroke="#c8281e" strokeWidth="1.300" /><path d="M3 11c3-1 4-3 3.500-6 0 2 1.500 4 4 4-3 0-5 .5-7.500 2z" fill="none" stroke="#c8281e" /></svg>
        <TitleText>黄帝内经（素问灵枢）全.pdf （已加密） - Adobe Acrobat Pro DC</TitleText>
        <WinButtons>
          <WinBtn><svg width="11" height="2"><path d="M0 1h11" stroke="#222" /></svg></WinBtn>
          <WinBtn><svg width="11" height="11" fill="none" stroke="#222"><path d="M.5 2.500h8v8h-8zM2.500 2.500v-2h8v8h-2" /></svg></WinBtn>
          <WinBtn><svg width="11" height="11" stroke="#222"><path d="M.5.5l10 10M10.500.5l-10 10" /></svg></WinBtn>
        </WinButtons>
      </TitleBar>
      <MenuBar>
        {['文件(F)', '编辑(E)', '视图(V)', '签名(S)', '窗口(W)', '帮助(H)'].map(m => <span key={m}>{m}</span>)}
      </MenuBar>
      <TabBar>
        <HomeTab $w={76} $pl={15}>主页</HomeTab>
        <HomeTab $w={62} $pl={0}>工具</HomeTab>
        <DocTab $active $w={180}>黄帝内经（素问灵...<TabClose>×</TabClose></DocTab>
        <DocTab $w={180}>黄帝内经【中华书...</DocTab>
        <TabRight><HelpI /><TabIconGap /><BellI /><Login>登录</Login></TabRight>
      </TabBar>
      <Toolbar>
        <ToolBtn><SaveI /></ToolBtn><ToolBtn><StarI /></ToolBtn><ToolBtn><CloudI /></ToolBtn>
        <ToolBtn><PrintI /></ToolBtn><ToolBtn><MailI /></ToolBtn><ToolBtn><FindI /></ToolBtn>
        <ToolBtn $ml={303}><CircleArrow /></ToolBtn><ToolBtn><CircleArrow down /></ToolBtn>
        <PageInput>27</PageInput><PageTotal>/ 411</PageTotal>
        <ToolSep $l={10} $r={10} />
        <ToolBtn><Pointer /></ToolBtn><ToolBtn><HandI /></ToolBtn><ToolBtn><CircleOp /></ToolBtn><ToolBtn><CircleOp plus /></ToolBtn>
        <ZoomBox>125%<Caret /></ZoomBox>
        <ToolBtn $w={30} $ml={16}><FitI /></ToolBtn><Caret />
        <ToolBtn $ml={13}><ReadI /></ToolBtn>
        <ToolSep $l={10} $r={10} />
        <ToolBtn><NoteI /></ToolBtn><ToolBtn><MarkerI /></ToolBtn><ToolBtn><PenI /></ToolBtn><ToolBtn><TagI /></ToolBtn>
      </Toolbar>
      <Main>
        <LeftRail>
          <RailBtn><LockI /></RailBtn><RailBtn><PagesI /></RailBtn><RailBtn><BookmarkBlue /></RailBtn>
          <RailBtn><ClipI /></RailBtn><RailBtn $h={49}><LayerI /></RailBtn><RailBtn><PenI /></RailBtn>
          <Notch />
        </LeftRail>
        <Panel>
          <PanelHead>书签<svg width="13" height="13" stroke="#666" strokeWidth="2"><path d="M1 1l11 11M12 1L1 12" /></svg></PanelHead>
          <PanelTools>
            <ListViewI /><Gap $w={6} /><Caret /><PanelSep /><TrashI /><Gap $w={13} /><AddBM /><Gap $w={12} /><FindBM />
          </PanelTools>
          <ListArea>
            <Tree>
              {TREE.map(([d, t, open, sel]) => (
                <Row key={t} $d={d}>
                  <Chevron>{open ? <Chev /> : null}</Chevron>
                  <BM />
                  <Label $sel={sel}>{t}</Label>
                </Row>
              ))}
            </Tree>
            <PanelScroll>
              <ScrollArrow><ArrowUpS /></ScrollArrow>
              <PanelThumb />
              <Fill />
              <ScrollArrow><ArrowUpS flip /></ScrollArrow>
            </PanelScroll>
          </ListArea>
        </Panel>
        <Splitter $w={19}><LeftTri /></Splitter>
        <Viewer>
          <PageSheet>
            <PageBody>
              {LINES.map(([t, indent, end], i) => <DocLine key={i} $indent={indent} $end={end}>{lineContent(t)}</DocLine>)}
              <PageNum>• 19 •</PageNum>
            </PageBody>
          </PageSheet>
          <PageGap />
          <NextSheet />
        </Viewer>
        <VScroll>
          <VCap />
          <VArrow><ArrowUpS /></VArrow>
          <VThumb />
        </VScroll>
        <Splitter $w={19} $rb><LeftTri /></Splitter>
        <RightRail>
          <RBtn><RSearch /></RBtn>
          <RDiv />
          <RBtn><DocPlus /></RBtn><RBtn><DocConvert /></RBtn><RBtn><LayoutPink /></RBtn><RBtn><SignI /></RBtn><RBtn><SignPen /></RBtn>
          <RBtn><DocTeal /></RBtn><RBtn><CropGreen /></RBtn><RBtn><DocNote /></RBtn><RBtn><ChatY /></RBtn><RBtn><ScanG /></RBtn>
          <RBtn><ShieldI /></RBtn><RBtn><ToolPlus /></RBtn>
          <RBottomDiv />
        </RightRail>
      </Main>
      <TaskBar>
        <TaskPlain><WinLogo /></TaskPlain>
        <TaskPlain><SearchW /></TaskPlain>
        <TaskItem $ml={7}><Folder /></TaskItem>
        <TaskItem $ml={5} $w={44} $bg="#4a4a4a"><AcrobatI /></TaskItem>
        <TaskItem $ml={9}><Baidu /></TaskItem>
        <TaskItem $ml={9} $bg="#3b7a36" $line="#3fdf3f"><Player /></TaskItem>
        <TaskItem $ml={9}><RecordI /></TaskItem>
        <TaskItem $ml={9}><FoxI /></TaskItem>
        <Tray>
          <TraySlot $w={24}><ChevUp /></TraySlot>
          <TraySlot $w={22}><MicW /></TraySlot>
          <TraySlot $w={28}><Battery /></TraySlot>
          <TraySlot $w={22}><Wifi /></TraySlot>
          <TraySlot $w={24}><Speaker /></TraySlot>
          <TraySlot $w={22}><ImeChar>英</ImeChar></TraySlot>
          <TraySlot $w={36}><TrayLogo>iFLY</TrayLogo></TraySlot>
          <TraySlot $w={72}><Clock><span>21:57</span><span>2024/5/13</span></Clock></TraySlot>
          <TraySlot $w={42}><NotifI /><NotifBadge>2</NotifBadge><ShowDesktop /></TraySlot>
        </Tray>
      </TaskBar>
      <Download>
        <DlPill>
          <svg width="16" height="16" viewBox="0 0 16 16" fill="#fff"><circle cx="6" cy="4.500" r="3.500" /><path d="M0 14c0-4 3-5.500 6-5.500 1.500 0 2.500.5 3.500 1V14z" /></svg>
        </DlPill>
        <DlArrow>
          <svg width="18" height="18" viewBox="0 0 18 18" fill="none" stroke="#fff" strokeWidth="2.400" strokeLinecap="round" strokeLinejoin="round"><path d="M9 2v14M3 10l6 6 6-6" /></svg>
        </DlArrow>
        <DlText>下载</DlText>
      </Download>
      <Monitor>
        <MonDot /><MonBar />
        <MonVal $mt={13}>0.3</MonVal>
        <MonRate><svg width="7" height="9" viewBox="0 0 7 9"><path d="M3.500 0L7 4H5v5H2V4H0z" fill="#2aa5f5" /></svg>K/s</MonRate>
        <MonVal $mt={1}>0.1</MonVal>
        <MonRate><svg width="7" height="9" viewBox="0 0 7 9"><path d="M3.500 9L7 5H5V0H2v5H0z" fill="#15b060" /></svg>K/s</MonRate>
      </Monitor>
      <Ifly>
        <IflyBtn $mr={3}><IflyLogo>iFLY</IflyLogo></IflyBtn>
        <IflyBtn><IflyCh>英</IflyCh></IflyBtn>
        <IflyBtn><IfDots /></IflyBtn>
        <IflyBtn><MicW c="#3f76e4" /></IflyBtn>
        <IflyBtn><IfGrid /></IflyBtn>
      </Ifly>
      <ExitArrow>
        <svg width="18" height="16" viewBox="0 0 18 16" fill="none" stroke="#666" strokeWidth="1.600"><path d="M1.500 0v16" strokeWidth="2.500" /><path d="M6 8h10M12 4l4 4-4 4" /></svg>
      </ExitArrow>
    </Win>
  );
}
